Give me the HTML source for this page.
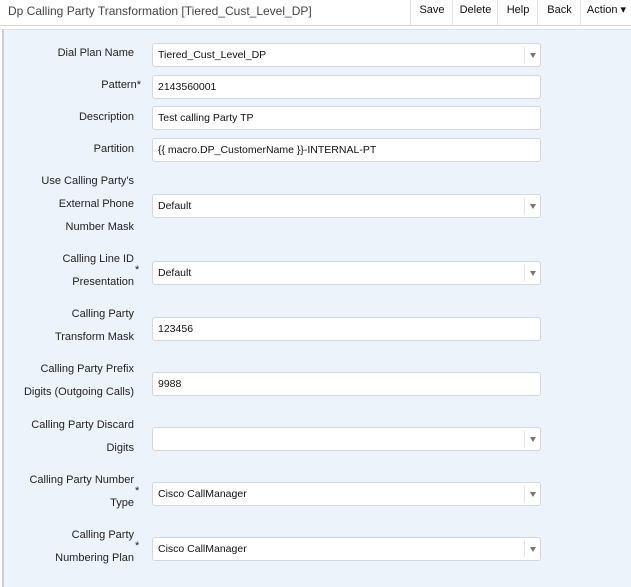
<!DOCTYPE html>
<html><head><style>
body{margin:0;width:631px;height:587px;background:#fff;font-family:"Liberation Sans",sans-serif;font-size:11px;color:#222;position:relative;overflow:hidden}
.hdr{position:absolute;left:0;top:0;width:631px;height:25px;border-bottom:1px solid #d8d8d8;background:#fff}
.title{position:absolute;left:8px;top:4px;font-size:12px;color:#444}
.btn{position:absolute;top:0;height:25px;line-height:20px;border-left:1px solid #e2e2e2;text-align:center;font-size:11px;color:#111}
.panel{position:absolute;left:2px;top:29px;width:629px;height:558px;background:#edf3fa;border-left:2px solid #cfcfcf;border-top:1px solid #dde3ea;box-sizing:border-box}
.in{position:absolute;left:152px;width:389px;height:24px;background:#fff;border:1px solid #d3d7dc;border-radius:3px;box-sizing:border-box;line-height:22px;padding-left:5px;font-size:10.5px;color:#111}
.sel::after{content:"";position:absolute;right:0;top:3px;width:15px;height:16px;border-left:1px solid #e3e3e3}
.arr{position:absolute;right:4px;top:9px;width:0;height:0;border-left:3.5px solid transparent;border-right:3.5px solid transparent;border-top:5px solid #777}
.lb{position:absolute;right:497px;text-align:right;font-size:11px;color:#222;line-height:23px;white-space:nowrap}
.st{position:absolute;left:135px;font-size:11px}
</style></head><body>
<div class="hdr">
<div class="title">Dp Calling Party Transformation [Tiered_Cust_Level_DP]</div>
<div class="btn" style="left:410px;width:42px">Save</div>
<div class="btn" style="left:452px;width:45px">Delete</div>
<div class="btn" style="left:497px;width:40px">Help</div>
<div class="btn" style="left:537px;width:43px">Back</div>
<div class="btn" style="left:580px;width:51px">Action ▾</div>
</div>
<div class="panel"></div>

<div class="lb" style="top:42px">Dial Plan Name</div>
<div class="in sel" style="top:43px">Tiered_Cust_Level_DP<span class="arr"></span></div>

<div class="lb" style="top:74px;right:490px">Pattern*</div>
<div class="in" style="top:75px">2143560001</div>

<div class="lb" style="top:106px">Description</div>
<div class="in" style="top:106px">Test calling Party TP</div>

<div class="lb" style="top:138px">Partition</div>
<div class="in" style="top:138px">{{ macro.DP_CustomerName }}-INTERNAL-PT</div>

<div class="lb" style="top:170px">Use Calling Party's<br>External Phone<br>Number Mask</div>
<div class="in sel" style="top:194px">Default<span class="arr"></span></div>

<div class="lb" style="top:248px">Calling Line ID<br>Presentation</div>
<div class="st" style="top:264px">*</div>
<div class="in sel" style="top:261px">Default<span class="arr"></span></div>

<div class="lb" style="top:303px">Calling Party<br>Transform Mask</div>
<div class="in" style="top:317px">123456</div>

<div class="lb" style="top:358px">Calling Party Prefix<br>Digits (Outgoing Calls)</div>
<div class="in" style="top:372px">9988</div>

<div class="lb" style="top:414px">Calling Party Discard<br>Digits</div>
<div class="in sel" style="top:427px"><span class="arr"></span></div>

<div class="lb" style="top:469px">Calling Party Number<br>Type</div>
<div class="st" style="top:485px">*</div>
<div class="in sel" style="top:482px">Cisco CallManager<span class="arr"></span></div>

<div class="lb" style="top:524px">Calling Party<br>Numbering Plan</div>
<div class="st" style="top:540px">*</div>
<div class="in sel" style="top:537px">Cisco CallManager<span class="arr"></span></div>
</body></html>
